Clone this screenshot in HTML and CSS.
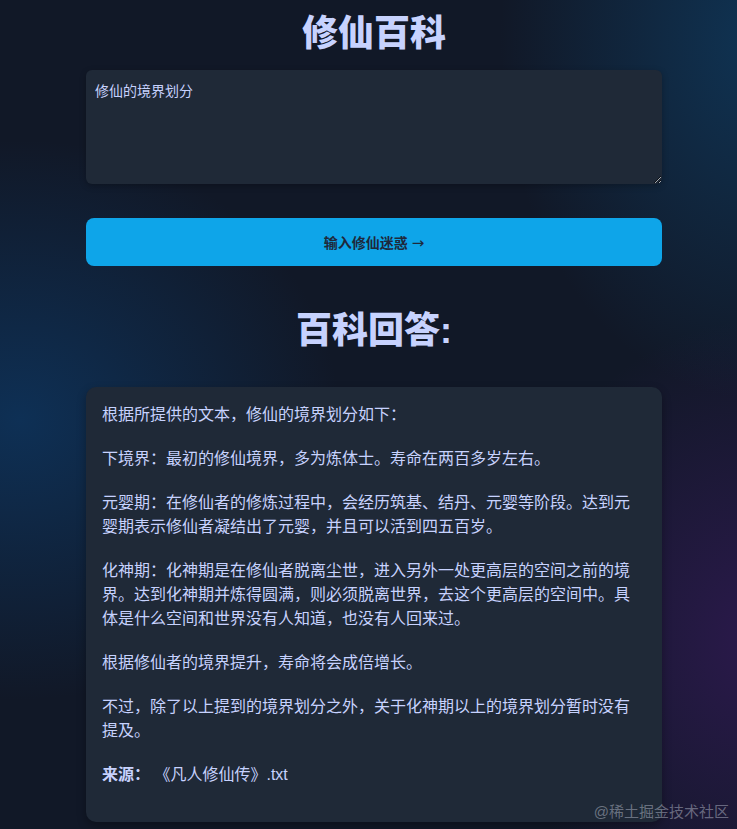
FILE: index.html
```html
<!DOCTYPE html>
<html lang="zh-CN">
<head>
<meta charset="UTF-8">
<meta name="viewport" content="width=device-width, initial-scale=1.0">
<title>修仙百科</title>
<link rel="stylesheet" href="styles.css">
</head>
<body>
    <div class="page">
        <h1 class="title">修仙百科</h1>

        <!-- 提问 -->
        <textarea class="ask">修仙的境界划分</textarea>
        <button class="submit">输入修仙迷惑 <span class="arrow">→</span></button>

        <!-- 回答 -->
        <h2 class="title">百科回答:</h2>
        <div class="answer">
            <p>根据所提供的文本，修仙的境界划分如下：</p>
            <p>下境界：最初的修仙境界，多为炼体士。寿命在两百多岁左右。</p>
            <p>元婴期：在修仙者的修炼过程中，会经历筑基、结丹、元婴等阶段。达到元婴期表示修仙者凝结出了元婴，并且可以活到四五百岁。</p>
            <p>化神期：化神期是在修仙者脱离尘世，进入另外一处更高层的空间之前的境界。达到化神期并炼得圆满，则必须脱离世界，去这个更高层的空间中。具体是什么空间和世界没有人知道，也没有人回来过。</p>
            <p>根据修仙者的境界提升，寿命将会成倍增长。</p>
            <p>不过，除了以上提到的境界划分之外，关于化神期以上的境界划分暂时没有提及。</p>
            <p class="source"><b>来源：</b> 《凡人修仙传》.txt</p>
        </div>
    </div>
    <div class="mark">@稀土掘金技术社区</div>
</body>
</html>
```

FILE: styles.css
```css
html, body {
    height: 100%;
}
body {
    margin: 0;
    position: relative;
    overflow: hidden;
    background:
        radial-gradient(ellipse 260px 360px at 760px 40px, rgba(14, 74, 120, 0.55), transparent),
        radial-gradient(ellipse 320px 280px at 20px 420px, rgba(12, 64, 116, 0.6), transparent),
        radial-gradient(ellipse 260px 320px at 760px 640px, rgba(60, 26, 100, 0.6), transparent),
        #111827;
    font-family: "Liberation Sans", "Noto Sans CJK SC", sans-serif;
    color: #c7d2fe;
}
.page {
    width: 576px;
    margin-left: 86px;
    padding-top: 14px;
    display: flex;
    flex-direction: column;
}
.title {
    margin: 0;
    text-align: center;
    font-size: 36px;
    line-height: 40px;
    font-weight: 900;
    color: #c7d2fe;
}
h1.title {
    margin-bottom: 16px;
}
h2.title {
    margin-top: 45px;
    margin-bottom: 36px;
}
.ask {
    box-sizing: border-box;
    height: 114px;
    padding: 10px 9px;
    border: none;
    border-radius: 6px;
    background: #1f2937;
    color: #c7d2fe;
    font-family: inherit;
    font-size: 14px;
    line-height: 22px;
    box-shadow: 0 2px 6px rgba(0, 0, 0, 0.25);
    outline: none;
}
.submit {
    margin-top: 34px;
    height: 48px;
    border: none;
    border-radius: 8px;
    background: #0ea5e9;
    color: #1e293b;
    font-family: inherit;
    font-size: 14px;
    font-weight: 600;
    cursor: pointer;
}
.arrow {
    font-family: "DejaVu Sans", sans-serif;
    font-weight: normal;
    font-size: 15px;
}
.answer {
    padding: 16px 20px 15px 16px;
    border-radius: 10px;
    background: #1f2937;
    box-shadow: 0 4px 10px rgba(0, 0, 0, 0.3);
    font-size: 16px;
    line-height: 24px;
}
.answer p {
    margin: 0 0 20px;
}
.answer b {
    font-weight: bold;
}
.mark {
    position: absolute;
    right: 8px;
    bottom: 8px;
    font-size: 15px;
    color: rgba(200, 205, 220, 0.45);
}
```
